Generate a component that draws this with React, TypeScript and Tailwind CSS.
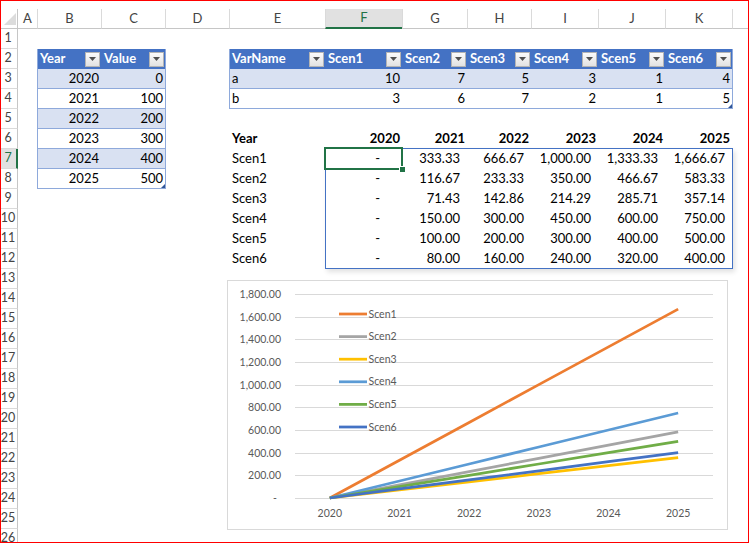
import clsx from "clsx";

const YEARS = [2020, 2021, 2022, 2023, 2024, 2025];

const SCEN = [
  { name: "Scen1", a: 10, b: 3, color: "#ED7D31" },
  { name: "Scen2", a: 7, b: 6, color: "#A5A5A5" },
  { name: "Scen3", a: 5, b: 7, color: "#FFC000" },
  { name: "Scen4", a: 3, b: 2, color: "#5B9BD5" },
  { name: "Scen5", a: 1, b: 1, color: "#70AD47" },
  { name: "Scen6", a: 4, b: 5, color: "#4472C4" },
];

const calc = (s: { a: number; b: number }, i: number) => (i * 100 * s.a) / s.b;
const fmt = (v: number) =>
  v === 0 ? "-" : v.toLocaleString("en-US", { minimumFractionDigits: 2, maximumFractionDigits: 2 });

// column header widths (B..K), A and L handled separately
const HEAD = [
  { l: "B", w: "w-[64px]" },
  { l: "C", w: "w-[64px]" },
  { l: "D", w: "w-[64px]" },
  { l: "E", w: "w-[96px]" },
  { l: "F", w: "w-[77px]" },
  { l: "G", w: "w-[65px]" },
  { l: "H", w: "w-[64px]" },
  { l: "I", w: "w-[67px]" },
  { l: "J", w: "w-[67px]" },
  { l: "K", w: "w-[67px]" },
];

const T2_W = ["w-[77px]", "w-[65px]", "w-[64px]", "w-[67px]", "w-[67px]", "w-[67px]"];
const BOX_W = ["w-[76px]", "w-[65px]", "w-[64px]", "w-[67px]", "w-[67px]", "w-[67px]"];

function DropBtn() {
  return (
    <span className="flex h-[15px] w-[15px] shrink-0 items-center justify-center border border-[#b4b4b4] bg-linear-to-b from-[#fbfbfb] to-[#e2e2e2]">
      <svg width="7" height="4" viewBox="0 0 7 4">
        <path d="M0 0h7L3.5 4z" fill="#505050" />
      </svg>
    </span>
  );
}

function Corner() {
  return <span className="absolute bottom-0 right-0 h-0 w-0 border-b-[4px] border-l-[4px] border-b-[#2f5597] border-l-transparent" />;
}

function Chart() {
  const x0 = 101.8;
  const dx = 69.67;
  const y0 = 217;
  const k = 22.667 / 200;
  const ticks = [0, 200, 400, 600, 800, 1000, 1200, 1400, 1600, 1800];
  const legendY = [33, 55.6, 78.2, 100.8, 123.4, 146];

  return (
    <div className="-ml-[2px] mt-[11px] h-[250px] w-[501px] border border-[#d9d9d9] bg-white">
      <svg width="499" height="248" className="block" fontFamily="Lato, sans-serif">
        {ticks.map((t) => {
          const y = Math.round(y0 - t * k) + 0.5;
          return (
            <g key={t}>
              <line x1={67} x2={485} y1={y} y2={y} stroke="#d9d9d9" strokeWidth="1" />
              <text x={t === 0 ? 49 : 53} y={y + 3.5} textAnchor="end" fontSize="10.5" fill="#595959">
                {t === 0 ? "-" : t.toLocaleString("en-US", { minimumFractionDigits: 2 })}
              </text>
            </g>
          );
        })}
        {YEARS.map((yr, i) => (
          <text key={yr} x={x0 + i * dx} y={235.5} textAnchor="middle" fontSize="10.5" fill="#595959">
            {yr}
          </text>
        ))}
        {SCEN.map((s) => (
          <polyline
            key={s.name}
            points={YEARS.map((_, i) => `${x0 + i * dx},${y0 - calc(s, i) * k}`).join(" ")}
            fill="none"
            stroke={s.color}
            strokeWidth="2.75"
            strokeLinejoin="round"
          />
        ))}
        {SCEN.map((s, i) => (
          <g key={s.name}>
            <line x1={111} x2={139} y1={legendY[i]} y2={legendY[i]} stroke={s.color} strokeWidth="2.75" />
            <text x={140.5} y={legendY[i] + 3.6} fontSize="10.5" fill="#595959">
              {s.name}
            </text>
          </g>
        ))}
      </svg>
    </div>
  );
}

export default function App() {
  return (
    <div className="h-[543px] w-[749px] overflow-hidden border border-[#ff0000] bg-white font-['Lato',sans-serif] text-[13px] text-black">
      <div className="h-[8px]" />

      {/* column headers */}
      <div className="flex h-[20px] text-[#444]">
        <div className="relative w-[17px] shrink-0 border-b border-r border-[#c6c6c6]">
          <svg width="12" height="12" className="absolute left-[3px] top-[4px]" viewBox="0 0 12 12">
            <path d="M12 0V12H0z" fill="#dcdcdc" />
          </svg>
        </div>
        <div className="flex w-[19px] shrink-0 items-center justify-center border-b border-[#c6c6c6]">A</div>
        {HEAD.map((h) => (
          <div
            key={h.l}
            className={clsx(
              "flex shrink-0 items-center justify-center border-l border-l-[#dadada]",
              h.w,
              h.l === "F" ? "border-b-2 border-b-[#217346] bg-[#e1e1e1] text-[#217346]" : "border-b border-b-[#c6c6c6]"
            )}
          >
            {h.l}
          </div>
        ))}
        <div className="flex-1 border-b border-l border-b-[#c6c6c6] border-l-[#dadada]" />
      </div>

      <div className="flex">
        {/* row headers */}
        <div className="w-[17px] shrink-0">
          {Array.from({ length: 26 }, (_, i) => i + 1).map((n) => (
            <div
              key={n}
              className={clsx(
                "flex h-[20px] items-center overflow-hidden border-b border-b-[#dadada] text-[12.5px]",
                n === 7 ? "border-r-2 border-r-[#217346] bg-[#e1e1e1] text-[#217346]" : "border-r border-r-[#c6c6c6] text-[#444]"
              )}
            >
              <span className="-ml-[5px] w-[24px] shrink-0 text-center">{n}</span>
            </div>
          ))}
        </div>

        {/* sheet */}
        <div className="flex-1">
          <div className="h-[20px]" />
          <div className="flex items-start">
            <div className="w-[19px] shrink-0" />

            {/* Table 1: Year / Value */}
            <div className="w-[129px] shrink-0 border-x border-[#8ea9db]">
              <div className="flex h-[20px] bg-[#4472c4] font-bold text-white">
                <div className="flex w-[63px] items-center justify-between pl-[2px] pr-[1px]">
                  Year <DropBtn />
                </div>
                <div className="flex w-[64px] items-center justify-between pl-[3px] pr-[1px]">
                  Value <DropBtn />
                </div>
              </div>
              {YEARS.map((y, i) => (
                <div
                  key={y}
                  className={clsx("flex h-[20px] border-b border-[#8ea9db]", i % 2 === 0 ? "bg-[#d9e1f2]" : "bg-white")}
                >
                  <div className="flex w-[63px] items-center justify-end pr-[2px]">{y}</div>
                  <div className="relative flex w-[64px] items-center justify-end pr-[2px]">
                    {i * 100}
                    {i === 5 && <Corner />}
                  </div>
                </div>
              ))}
            </div>

            <div className="w-[63px] shrink-0" />

            <div className="flex flex-col">
              {/* Table 2: VarName / Scen */}
              <div className="w-[504px] border-x border-[#8ea9db]">
                <div className="flex h-[20px] bg-[#4472c4] font-bold text-white">
                  <div className="flex w-[95px] items-center justify-between pl-[2px] pr-[1px]">
                    VarName <DropBtn />
                  </div>
                  {SCEN.map((s, i) => (
                    <div key={s.name} className={clsx("flex items-center justify-between pl-[3px] pr-[1px]", T2_W[i])}>
                      {s.name} <DropBtn />
                    </div>
                  ))}
                </div>
                {(["a", "b"] as const).map((v, r) => (
                  <div key={v} className={clsx("flex h-[20px] border-b border-[#8ea9db]", r === 0 ? "bg-[#d9e1f2]" : "bg-white")}>
                    <div className="flex w-[95px] items-center pl-[2px]">{v}</div>
                    {SCEN.map((s, i) => (
                      <div key={s.name} className={clsx("relative flex items-center justify-end pr-[2px]", T2_W[i])}>
                        {s[v]}
                        {r === 1 && i === 5 && <Corner />}
                      </div>
                    ))}
                  </div>
                ))}
              </div>

              <div className="h-[20px]" />

              {/* Table 3: computed values */}
              <div className="flex h-[20px] font-bold">
                <div className="flex w-[96px] items-center pl-[3px]">Year</div>
                {YEARS.map((y, i) => (
                  <div key={y} className={clsx("flex items-center justify-end pr-[2px]", T2_W[i])}>
                    {y}
                  </div>
                ))}
              </div>
              <div className="flex items-start">
                <div className="w-[96px] shrink-0">
                  {SCEN.map((s) => (
                    <div key={s.name} className="flex h-[20px] items-center pl-[3px]">
                      {s.name}
                    </div>
                  ))}
                </div>
                <div className="-mt-px h-[121px] w-[408px] shrink-0 border border-[#4472c4] shadow-[2px_3px_5px_rgba(0,0,0,0.12)]">
                  {SCEN.map((s, r) => (
                    <div key={s.name} className="flex h-[20px]">
                      {YEARS.map((_, i) => (
                        <div
                          key={i}
                          className={clsx(
                            "relative flex items-center justify-end",
                            BOX_W[i],
                            i === 0 ? "pr-[22px]" : "pr-[7px]"
                          )}
                        >
                          {fmt(calc(s, i))}
                          {r === 0 && i === 0 && (
                            <>
                              <span className="absolute -bottom-[1px] -left-[2px] -right-[1px] -top-[2px] border-2 border-[#217346]" />
                              <span className="absolute -bottom-[4px] -right-[4px] h-[7px] w-[7px] border border-white bg-[#217346]" />
                            </>
                          )}
                        </div>
                      ))}
                    </div>
                  ))}
                </div>
              </div>

              <Chart />
            </div>
          </div>
        </div>
      </div>
    </div>
  );
}
